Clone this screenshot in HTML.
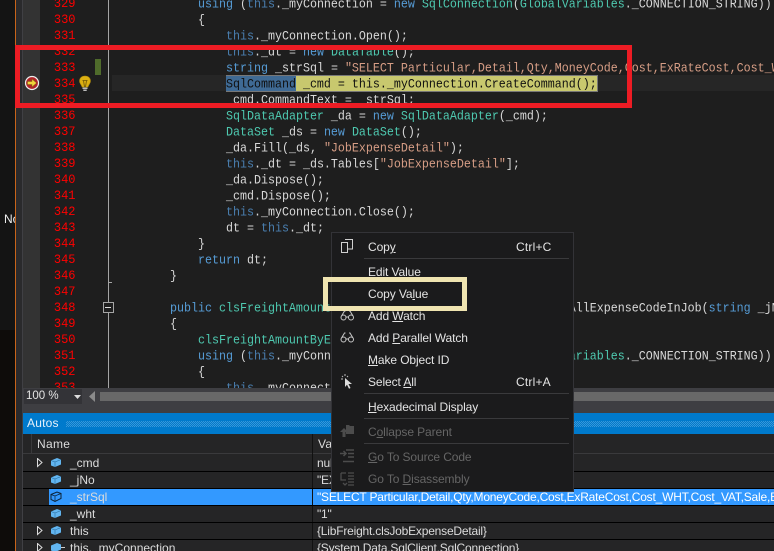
<!DOCTYPE html>
<html><head><meta charset="utf-8"><style>
html,body{margin:0;padding:0;background:#1e1e1e}
#p{position:relative;width:774px;height:551px;overflow:hidden;background:#1e1e1e;font-family:"Liberation Sans",sans-serif}
#p div,#p svg{position:absolute}
.ln{left:40px;width:35.500px;text-align:right;color:#f00;font:12px/16px "Liberation Mono",monospace;height:16px;margin-top:1px;transform:scaleY(1.08)}
.c{font:11.67px/16px "Liberation Mono",monospace;color:#d8d8d8;white-space:pre;height:16px;margin-top:1px;transform:scaleY(1.1)}
.k{color:#569cd6}.t{color:#4ec9b0}.s{color:#d69d85}.h{color:#4a7fb0}
.m{left:368px;color:#e4e4e4;font-size:12px;line-height:16px;white-space:nowrap;letter-spacing:-.1px}
.d{color:#656565}
.sc{left:516px;color:#e4e4e4;font-size:12px;line-height:16px;letter-spacing:.2px}
.sep{left:364px;width:205px;height:1px;background:#3a3a3c}
.rl{left:23px;width:751px;height:1px;background:#000}
.n{left:70px;color:#dcdcdc;font-size:12px;line-height:16px;white-space:nowrap}
.v{left:317px;color:#dcdcdc;font-size:12px;line-height:16px;white-space:nowrap;letter-spacing:-.2px}
u{text-underline-offset:1px}
</style></head><body><div id="p">
<!-- left chrome -->
<div style="left:0;top:0;width:15px;height:551px;background:#141414"></div>
<div style="left:0;top:330px;width:15px;height:221px;background:#0e0c0a"></div>
<div style="left:15px;top:0;width:1px;height:551px;background:#c8641a"></div>
<div style="left:16px;top:0;width:7px;height:551px;background:#2a2a2c"></div>
<div style="left:22px;top:0;width:1px;height:551px;background:#404044"></div>
<div style="left:23px;top:0;width:17px;height:388px;background:#333"></div>
<div style="left:4px;top:211px;width:11px;height:16px;overflow:hidden;color:#eee;font-size:12px;line-height:16px">No</div>

<!-- line numbers -->
<div class="ln" style="top:-5px">329</div><div class="ln" style="top:11px">330</div><div class="ln" style="top:27px">331</div><div class="ln" style="top:43px">332</div><div class="ln" style="top:59px">333</div><div class="ln" style="top:75px">334</div><div class="ln" style="top:91px">335</div><div class="ln" style="top:107px">336</div><div class="ln" style="top:123px">337</div><div class="ln" style="top:139px">338</div><div class="ln" style="top:155px">339</div><div class="ln" style="top:171px">340</div><div class="ln" style="top:187px">341</div><div class="ln" style="top:203px">342</div><div class="ln" style="top:219px">343</div><div class="ln" style="top:235px">344</div><div class="ln" style="top:251px">345</div><div class="ln" style="top:267px">346</div><div class="ln" style="top:283px">347</div><div class="ln" style="top:299px">348</div><div class="ln" style="top:315px">349</div><div class="ln" style="top:331px">350</div><div class="ln" style="top:347px">351</div><div class="ln" style="top:363px">352</div><div style="left:40px;top:380px;width:36px;height:8px;overflow:hidden"><div class="ln" style="left:0;top:0;margin:0">353</div></div>

<!-- margin bits -->
<div style="left:95px;top:59px;width:6px;height:16px;background:#4f6b2b"></div>
<div style="left:108px;top:0;width:1px;height:388px;background:#a5a5a5"></div>
<div style="left:108px;top:282px;width:4px;height:1px;background:#a5a5a5"></div>
<div style="left:103px;top:302px;width:9px;height:9px;border:1px solid #a5a5a5;background:#1e1e1e"></div>
<div style="left:105px;top:307px;width:6px;height:1px;background:#ddd"></div>
<div style="left:112px;top:75px;width:662px;height:16px;background:#262626"></div>
<svg style="left:24px;top:75px" width="16" height="16" viewBox="0 0 16 16"><circle cx="8" cy="8" r="6.500" fill="#b02428" stroke="#eee" stroke-width="1.200"/><path d="M3.500 6.500H8V4L12.500 8 8 12V9.500H3.500z" fill="#f2d43c" stroke="#7a6a10" stroke-width=".5"/></svg>
<svg style="left:78px;top:75px" width="14" height="18" viewBox="0 0 14 18"><path d="M7 1C3.500 1 1.500 3.400 1.500 6c0 2.600 2 3.600 2.600 6h5.800c.6-2.400 2.600-3.400 2.600-6C12.500 3.400 10.500 1 7 1z" fill="#dcb012" stroke="#b28c0c" stroke-width=".6"/><path d="M4.500 5.500h5M5.500 5.500l1 6.500M8.500 5.500l-1 6.500" stroke="#6a5408" stroke-width=".8" fill="none"/><path d="M4.500 12.500h5v1.500h-5zM5.300 14.500h3.400v1.500H5.300z" fill="#bbb"/></svg>

<!-- code -->
<div class="c" style="left:198px;top:-5px"><span class="k">using</span> (<span class="h">this</span>._myConnection = <span class="k">new</span> <span class="t">SqlConnection</span>(<span class="t">GlobalVariables</span>._CONNECTION_STRING))</div>
<div class="c" style="left:198px;top:11px">{</div>
<div class="c" style="left:226px;top:27px"><span class="h">this</span>._myConnection.Open();</div>
<div class="c" style="left:226px;top:43px"><span class="h">this</span>._dt = <span class="k">new</span> <span class="t">DataTable</span>();</div>
<div class="c" style="left:226px;top:59px"><span class="k">string</span> _strSql = <span class="s">"SELECT Particular,Detail,Qty,MoneyCode,Cost,ExRateCost,Cost_WHT</span></div>
<div style="left:226px;top:75px;width:70px;height:15px;background:#3f6a94;border:solid #777;border-width:1px 0"></div>
<div style="left:296px;top:75px;width:301px;height:15px;background:#c8c86e;border:solid #777;border-width:1px 1px 1px 0"></div>
<div class="c" style="left:226px;top:75px;color:#101010">SqlCommand _cmd = this._myConnection.CreateCommand();</div>
<div class="c" style="left:226px;top:91px"> cmd.CommandText = _strSql;</div>
<div class="c" style="left:226px;top:107px"><span class="t">SqlDataAdapter</span> _da = <span class="k">new</span> <span class="t">SqlDataAdapter</span>(_cmd);</div>
<div class="c" style="left:226px;top:123px"><span class="t">DataSet</span> _ds = <span class="k">new</span> <span class="t">DataSet</span>();</div>
<div class="c" style="left:226px;top:139px">_da.Fill(_ds, <span class="s">"JobExpenseDetail"</span>);</div>
<div class="c" style="left:226px;top:155px"><span class="h">this</span>._dt = _ds.Tables[<span class="s">"JobExpenseDetail"</span>];</div>
<div class="c" style="left:226px;top:171px">_da.Dispose();</div>
<div class="c" style="left:226px;top:187px">_cmd.Dispose();</div>
<div class="c" style="left:226px;top:203px"><span class="h">this</span>._myConnection.Close();</div>
<div class="c" style="left:226px;top:219px">dt = <span class="h">this</span>._dt;</div>
<div class="c" style="left:198px;top:235px">}</div>
<div class="c" style="left:198px;top:251px"><span class="k">return</span> dt;</div>
<div class="c" style="left:170px;top:267px">}</div>
<div class="c" style="left:170px;top:299px"><span class="k">public</span> <span class="t">clsFreightAmountByExpenseCodeCollection</span> GetDetail_AllExpenseCodeInJob(<span class="k">string</span> _jNo</div>
<div class="c" style="left:170px;top:315px">{</div>
<div class="c" style="left:198px;top:331px"><span class="t">clsFreightAmountByExpenseCode</span> _x;</div>
<div class="c" style="left:198px;top:347px"><span class="k">using</span> (<span class="h">this</span>._myConnection = <span class="k">new</span> <span class="t">SqlConnection</span>(<span class="t">GlobalVariables</span>._CONNECTION_STRING))</div>
<div class="c" style="left:198px;top:363px">{</div>
<div style="left:40px;top:380px;width:734px;height:8px;overflow:hidden"><div class="c" style="left:186px;top:0;margin:0"><span class="h">this</span>._myConnection.Open();</div></div>

<!-- scrollbar area -->
<div style="left:23px;top:388px;width:751px;height:25px;background:#3e3e42"></div>
<div style="left:24px;top:389px;width:58px;height:15px;background:#333337"></div>
<div style="left:26px;top:389px;color:#e4e4e4;font-size:11.500px;line-height:15px">100 %</div>
<svg style="left:74px;top:395px" width="8" height="5"><path d="M0 0h7L3.500 4z" fill="#ddd"/></svg>
<svg style="left:89px;top:391px" width="7" height="11"><path d="M6 0v11L0 5.500z" fill="#8a8a8a"/></svg>
<div style="left:100px;top:392px;width:674px;height:9px;background:#686868"></div>

<!-- Autos -->
<div style="left:23px;top:413px;width:751px;height:21px;background:#007acc"></div>
<div style="left:27px;top:415px;color:#e8f2fa;font-size:12px;line-height:16px;letter-spacing:.2px">Autos</div>
<div style="left:66px;top:421px;width:708px;height:6px;background:repeating-conic-gradient(#3a97d8 0 25%,#007acc 0 50%) 0 0/2px 2px"></div>
<div style="left:23px;top:434px;width:751px;height:117px;background:#252526"></div>
<div style="left:23px;top:434px;width:751px;height:19px;background:#252526;border-bottom:1px solid #3a3a3c"></div>
<div style="left:31px;top:434px;width:1px;height:19px;background:#3a3a3c"></div>
<div style="left:312px;top:434px;width:1px;height:117px;background:#111"></div>
<div style="left:37px;top:436px;color:#dcdcdc;font-size:12px;line-height:16px;letter-spacing:.3px">Name</div>
<div style="left:318px;top:436px;color:#dcdcdc;font-size:12px;line-height:16px;letter-spacing:.3px">Value</div>
<div class="rl" style="top:471px"></div><div class="rl" style="top:488px"></div><div class="rl" style="top:505px"></div><div class="rl" style="top:522px"></div><div class="rl" style="top:539px"></div>
<div style="left:49px;top:489px;width:263px;height:16px;background:#3399ff"></div>
<div style="left:313px;top:489px;width:461px;height:16px;background:#3399ff"></div>

<svg style="left:37px;top:458px" width="6" height="10"><path d="M.5.500v8l4.500-4z" fill="none" stroke="#ddd"/></svg>
<svg style="left:37px;top:526px" width="6" height="10"><path d="M.5.500v8l4.500-4z" fill="none" stroke="#ddd"/></svg>
<svg style="left:37px;top:543px" width="6" height="8"><path d="M.5.500v8l4.500-4z" fill="none" stroke="#ddd"/></svg>

<svg style="left:50px;top:457px" width="12" height="11" viewBox="0 0 12 11"><path d="M1 3.500L7 1l4 1.500v5L5 10 1 8.500z" fill="#62b5f0"/><path d="M1 3.500L5 5l6-2.500M5 5v5" stroke="#1e5f90" stroke-width=".5" fill="none"/></svg>
<svg style="left:50px;top:474px" width="12" height="11" viewBox="0 0 12 11"><path d="M1 3.500L7 1l4 1.500v5L5 10 1 8.500z" fill="#62b5f0"/><path d="M1 3.500L5 5l6-2.500M5 5v5" stroke="#1e5f90" stroke-width=".5" fill="none"/></svg>
<svg style="left:50px;top:491px" width="12" height="12" viewBox="0 0 12 12"><path d="M1 3.500L7 1l4 1.500v5L5 10.500 1 8.500z" fill="#3399ff" stroke="#0c2236"/><path d="M1 3.500L5 5l6-2.500M5 5v5" stroke="#0c2236" stroke-width=".7" fill="none"/></svg>
<svg style="left:50px;top:508px" width="12" height="11" viewBox="0 0 12 11"><path d="M1 3.500L7 1l4 1.500v5L5 10 1 8.500z" fill="#62b5f0"/><path d="M1 3.500L5 5l6-2.500M5 5v5" stroke="#1e5f90" stroke-width=".5" fill="none"/></svg>
<svg style="left:50px;top:525px" width="12" height="11" viewBox="0 0 12 11"><path d="M1 3.500L7 1l4 1.500v5L5 10 1 8.500z" fill="#62b5f0"/><path d="M1 3.500L5 5l6-2.500M5 5v5" stroke="#1e5f90" stroke-width=".5" fill="none"/></svg>
<svg style="left:50px;top:542px" width="16" height="9" viewBox="0 0 16 9"><path d="M1 3.500L7 1l4 1.500v5L5 10 1 8.500z" fill="#62b5f0"/><path d="M11 5.500h4" stroke="#ccc"/></svg>

<div class="n" style="top:455px">_cmd</div><div class="n" style="top:472px">_jNo</div><div class="n" style="top:489px">_strSql</div><div class="n" style="top:506px">_wht</div><div class="n" style="top:523px">this</div><div class="n" style="top:540px">this._myConnection</div>
<div class="v" style="top:455px">null</div><div class="v" style="top:472px">"EX</div>
<div class="v" style="top:489px;color:#fff">"SELECT Particular,Detail,Qty,MoneyCode,Cost,ExRateCost,Cost_WHT,Cost_VAT,Sale,Ex</div>
<div class="v" style="top:506px">"1"</div><div class="v" style="top:523px">{LibFreight.clsJobExpenseDetail}</div><div class="v" style="top:540px">{System.Data.SqlClient.SqlConnection}</div>

<!-- red annotation -->
<div style="left:15px;top:45px;width:607px;height:53px;border:5px solid #ed1c24"></div>

<!-- context menu -->
<div style="left:331px;top:232px;width:241px;height:258px;background:#1b1b1c;border:1px solid #333337"></div>
<div class="sep" style="top:258px"></div><div class="sep" style="top:393px"></div><div class="sep" style="top:418px"></div><div class="sep" style="top:443px"></div>
<svg style="left:340px;top:238px" width="14" height="16" viewBox="0 0 14 16" fill="none" stroke="#d0d0d0"><path d="M1.500 4.500h6v10h-6zM5 1.500h7.500v9.500H8"/></svg>
<div class="m" style="top:239px">Cop<u>y</u></div><div class="sc" style="top:239px">Ctrl+C</div>
<div class="m" style="top:264px">Edit Value</div>
<div class="m" style="top:286px">Copy Va<u>l</u>ue</div>
<svg style="left:340px;top:310px" width="15" height="11" viewBox="0 0 15 11" fill="none" stroke="#c8c8c8"><circle cx="3.500" cy="7.500" r="2.500"/><circle cx="11" cy="7.500" r="2.500"/><path d="M6 7h3M1.500 6l3-5h1M13 6l-3-5H9"/></svg>
<div class="m" style="top:308px">Add <u>W</u>atch</div>
<svg style="left:340px;top:332px" width="15" height="11" viewBox="0 0 15 11" fill="none" stroke="#c8c8c8"><circle cx="3.500" cy="7.500" r="2.500"/><circle cx="11" cy="7.500" r="2.500"/><path d="M6 7h3M1.500 6l3-5h1M13 6l-3-5H9"/></svg>
<div class="m" style="top:330px">Add <u>P</u>arallel Watch</div>
<div class="m" style="top:352px"><u>M</u>ake Object ID</div>
<svg style="left:341px;top:374px" width="13" height="15" viewBox="0 0 13 15"><path d="M4 4l7 6H7.500l2 4-1.500.7-2-4L4 13z" fill="#ddd"/><path d="M1 2l1 1M4 0v2M7 2L6 3M0 5h2" stroke="#bbb"/></svg>
<div class="m" style="top:374px">Select <u>A</u>ll</div><div class="sc" style="top:374px">Ctrl+A</div>
<div class="m" style="top:399px"><u>H</u>exadecimal Display</div>
<svg style="left:340px;top:424px" width="15" height="14" viewBox="0 0 15 14"><path d="M6 1h3l1 1h4v8H6z" fill="#4c4c4c"/><path d="M4 4L0 8h2.500v5h3V8H8z" fill="#4c4c4c"/></svg>
<div class="m d" style="top:424px">C<u>o</u>llapse Parent</div>
<svg style="left:340px;top:449px" width="15" height="14" viewBox="0 0 15 14" fill="none" stroke="#4c4c4c" stroke-width="1.500"><path d="M6 1h8M8 4.500h6M8 8h6M3 12.500h11M0 4.500h5M3.500 2l2.500 2.500L3.500 7"/></svg>
<div class="m d" style="top:449px"><u>G</u>o To Source Code</div>
<svg style="left:340px;top:471px" width="15" height="15" viewBox="0 0 15 15" fill="none" stroke="#4c4c4c" stroke-width="1.300"><path d="M1 2h5M1 2v7h5M8 2h6M8 5h6M8 8h6M8 11h6M8 14h6M3 12l2 2 2-2"/></svg>
<div class="m d" style="top:471px">Go To <u>D</u>isassembly</div>

<!-- yellow annotation -->
<div style="left:323px;top:277px;width:134px;height:24px;border:5px solid #efe4b0"></div>
</div></body></html>
